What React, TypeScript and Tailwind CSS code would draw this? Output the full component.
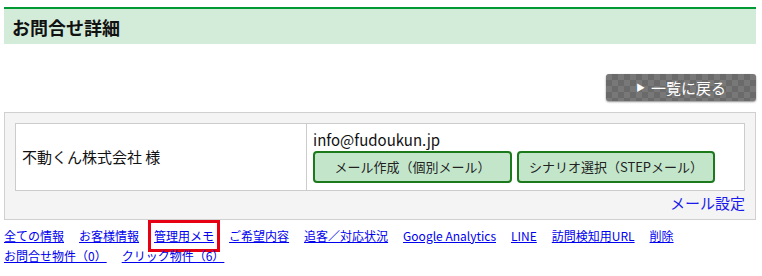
import React from "react";

const links = [
  { label: "全ての情報" },
  { label: "お客様情報" },
  { label: "管理用メモ", active: true },
  { label: "ご希望内容" },
  { label: "追客／対応状況" },
  { label: "Google Analytics" },
  { label: "LINE" },
  { label: "訪問検知用URL" },
  { label: "削除" },
  { label: "お問合せ物件（0）" },
  { label: "クリック物件（6）" },
];

const MailButton = ({ label, width }: { label: string; width: string }) => {
  return (
    <button
      className={`${width} h-[32px] rounded-[4px] border-2 border-[#1c7a1c] bg-[#c3e6cb] text-[13px] text-[#222] text-center`}
    >
      {label}
    </button>
  );
};

export default function App() {
  return (
    <div className="bg-white min-h-[276px] pt-[7px] font-['Noto_Sans_CJK_JP','Noto_Sans',sans-serif] text-[#111]">
      <div className="ml-[4px] w-[752px]">
        {/* title bar */}
        <div className="h-[37px] border-t-2 border-[#009933] bg-[#d2ecd9] px-[8px] flex items-center">
          <h1 className="text-[18px] font-bold leading-none text-[#111]">お問合せ詳細</h1>
        </div>

        {/* back */}
        <div className="mt-[30px] flex justify-end">
          <button className="w-[150px] h-[27px] rounded-[3px] bg-[#707070] bg-[conic-gradient(#6a6a6a_25%,#787878_0_50%,#6a6a6a_0_75%,#787878_0)] bg-[length:12px_12px] shadow-[0_1px_2px_rgba(0,0,0,0.45)] flex items-center justify-center gap-[6px] text-white text-[15px]">
            <span className="text-[9px] leading-none">▶</span>
            <span className="leading-none">一覧に戻る</span>
          </button>
        </div>

        {/* customer panel */}
        <div className="mt-[11px] border border-[#d0d0d0] bg-[#f4f4f4] px-[10px] pt-[10px] pb-[6px]">
          <table className="w-full border-collapse bg-white">
            <tbody>
              <tr>
                <td className="w-[291px] border border-[#cccccc] px-[6px] align-middle text-[15px] text-[#111]">
                  不動くん株式会社 様
                </td>
                <td className="border border-[#cccccc] px-[6px] pt-[6px] pb-[7px] align-top">
                  <div className="text-[15px] leading-[20px] text-[#111]">info@fudoukun.jp</div>
                  <div className="mt-[1px] flex gap-[5px]">
                    <MailButton label="メール作成（個別メール）" width="w-[199px]" />
                    <MailButton label="シナリオ選択（STEPメール）" width="w-[198px]" />
                  </div>
                </td>
              </tr>
            </tbody>
          </table>
          <div className="mt-[2px] flex justify-end">
            <a href="#" className="text-[15px] leading-[20px] text-[#1a1aee]">
              メール設定
            </a>
          </div>
        </div>

        {/* tab links */}
        <div className="mt-[6px] flex flex-wrap gap-x-[15px] text-[12px] leading-[20px]">
          {links.map((l) => (
            <a
              key={l.label}
              href="#"
              className={`text-[#0000ee] underline ${
                l.active ? "outline-[3px] outline-solid outline-[#e60012] outline-offset-[3px]" : ""
              }`}
            >
              {l.label}
            </a>
          ))}
        </div>
      </div>
    </div>
  );
}
